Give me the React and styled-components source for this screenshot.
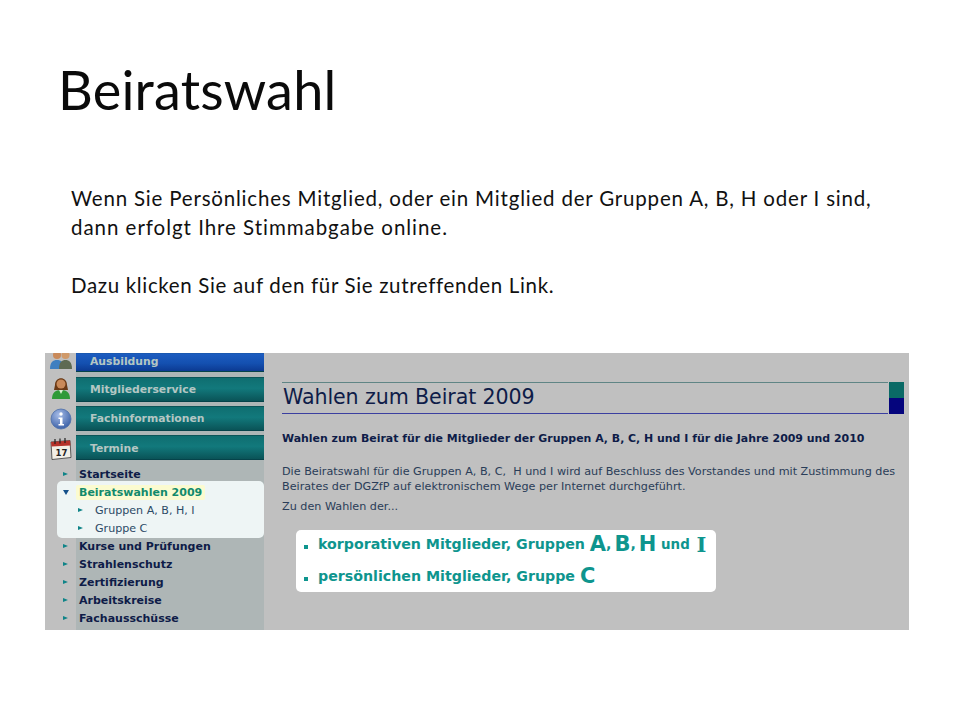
import React from "react";
import styled, { createGlobalStyle } from "styled-components";

const Global = createGlobalStyle`
  html, body { margin: 0; padding: 0; background: #fff; }
`;
const Slide = styled.div`
  width: 960px; height: 720px; box-sizing: border-box; overflow: hidden;
  padding: 58px 45px 0 45px; background: #fff; font-family: Lato, "Open Sans", sans-serif; color: #000;
`;
const Title = styled.h1`
  margin: 0 0 0 13px; font-weight: 400; font-size: 54px; line-height: 64px; letter-spacing: .2px; color: #0a0a0a;
`;
const Intro = styled.div`
  margin: 62px 0 0 26px; font-size: 20.5px; line-height: 29px; color: #111;
`;
const IntroLine = styled.p`
  margin: ${p => (p.$gap ? "29px" : "0")} 0 0; white-space: nowrap; letter-spacing: ${p => p.$ls}px;
`;
const Shot = styled.div`
  margin-top: 53px; width: 864px; height: 277px; display: flex; overflow: hidden; background: #c0c0c0;
  font-family: "DejaVu Sans", Verdana, sans-serif;
`;
const Sidebar = styled.aside`
  width: 219px; flex: none; display: flex;
`;
const IconColumn = styled.div`
  width: 31px; flex: none; display: flex; flex-direction: column; align-items: center;
`;
const IconSlot = styled.div`
  height: ${p => p.$h}px; width: 100%; display: flex; align-items: center; justify-content: center; flex: none; overflow: hidden;
`;
const NavColumn = styled.div`
  width: 188px; flex: none; background: #aeb6b6; display: flex; flex-direction: column;
`;
const NavButton = styled.div`
  height: ${p => p.$h || 25}px; flex: none; margin-bottom: ${p => p.$mb ?? 4.4}px; box-sizing: border-box;
  padding: ${p => (p.$blue ? 0 : 3)}px 0 0 14px; display: flex; align-items: center;
  background: ${p => p.$blue
    ? "linear-gradient(#1c5cc0, #1450b0 55%, #0c3a92)"
    : "linear-gradient(#0f6e70, #12797c 45%, #0a5357)"};
  border-top: 1px solid ${p => (p.$blue ? "#1a58b0" : "#0c5558")};
  border-bottom: 1px solid #06434a;
  color: #b4c6c3; font-size: 10.8px; font-weight: 700; line-height: 1;
`;
const Menu = styled.ul`
  list-style: none; margin: 5px 0 0; padding: 0; flex: 1; background: #aeb6b6;
`;
const Group = styled.div`
  margin: -2px 0 -1px -19px; padding: 2px 0 0 19px; height: 57px; box-sizing: border-box;
  background: #eef5f5; border-radius: 5px; position: relative;
`;
const Item = styled.li`
  height: 18px; display: flex; align-items: center; position: relative; white-space: nowrap;
  padding-left: ${p => (p.$sub ? "19px" : "3px")};
  font-size: ${p => (p.$sub ? "11.1px" : "11px")};
  font-weight: ${p => (p.$sub ? 400 : 700)};
  color: ${p => (p.$sub ? "#2c4a66" : "#0e1c48")};
`;
const Marker = styled.span`
  position: absolute; top: 6.5px; left: ${p => p.$left}px; width: 0; height: 0;
  ${p => p.$open
    ? "border-left: 3px solid transparent; border-right: 3px solid transparent; border-top: 5px solid #14508a;"
    : "border-top: 2.5px solid transparent; border-bottom: 2.5px solid transparent; border-left: 5px solid #0f8488;"}
`;
const ActiveLabel = styled.span`
  background: #fbfbd0; color: #128a6c; padding: 1px 3px; margin-left: -3px; border-radius: 2px;
`;
const Main = styled.main`
  flex: 1; min-width: 0; padding: 29px 5px 0 18px; color: #15254a;
`;
const HeadingRow = styled.div`
  display: flex; align-items: stretch; height: 32px;
`;
const Heading = styled.h2`
  flex: 1; margin: 0; box-sizing: border-box; padding-left: 1px; font-weight: 400; font-size: 20.6px; line-height: 28px;
  letter-spacing: -.1px; color: #0e1c48; border-top: 1px solid #5f8585; border-bottom: 1px solid #3b3fa0;
`;
const HeadingBlock = styled.div`
  width: 15px; flex: none; margin-left: 1px; background: linear-gradient(#0a6a66 50%, #05057d 50%);
`;
const Lead = styled.p`
  margin: 18px 0 0; font-size: 10.95px; line-height: 14px; font-weight: 700; color: #0e1c48; white-space: nowrap;
`;
const Para = styled.p`
  margin: ${p => p.$mt}px 0 0; font-size: 11.2px; line-height: 15px; color: #2a3d58; white-space: nowrap;
`;
const LinkBox = styled.div`
  margin: 16px 0 0 14px; width: 420px; height: 62px; box-sizing: border-box; background: #fff; border-radius: 5px;
  padding: 0 0 0 7px; display: flex; flex-direction: column; color: #0e958e;
`;
const LinkRow = styled.div`
  height: ${p => p.$h}px; display: flex; align-items: flex-end; font-size: 14.2px; font-weight: 700; white-space: nowrap; position: relative; padding-left: 15px; line-height: 19px;
`;
const Square = styled.span`
  position: absolute; left: 1px; bottom: 5px; width: 4px; height: 4px; background: #0e958e;
`;
const Big = styled.span`
  font-size: 21px; line-height: 19px; margin-left: ${p => p.$ml ?? 0}px;
  font-family: ${p => (p.$serif ? '"DejaVu Serif", serif' : "inherit")};
`;
const Tail = styled.span`
  font-size: 13.4px;
`;
const Thin = styled.span`
  font-size: 8.5px;
`;

const People = () => (
  <svg width="24" height="24" viewBox="0 0 24 24" style={{ marginTop: -8 }}>
    <circle cx="8" cy="9" r="4" fill="#c98a5a" />
    <path d="M4 7c1-4 7-4 8 0z" fill="#5a3a1e" />
    <path d="M1 23c0-7 3-9 7-9s7 2 7 9z" fill="#3f7fc0" />
    <circle cx="16.5" cy="9" r="4" fill="#d09a6a" />
    <path d="M12.500 7c1-4 7-4 8 0z" fill="#2a2a2a" />
    <path d="M10 23c0-7 3-9 6.500-9s6.500 2 6.500 9z" fill="#5e6a52" />
  </svg>
);
const Person = () => (
  <svg width="20" height="24" viewBox="0 0 20 24">
    <path d="M4 9c0-9 12-9 12 0l1 5H3z" fill="#6b3a16" />
    <circle cx="10" cy="8" r="4.500" fill="#c98a5a" />
    <path d="M1 23c0-6 3-9 9-9s9 3 9 9z" fill="#2f9a38" />
    <path d="M8 14l2 4 2-4z" fill="#d8f0d0" />
  </svg>
);
const Info = () => (
  <svg width="22" height="22" viewBox="0 0 22 22">
    <defs>
      <radialGradient id="ig" cx=".4" cy=".3" r=".8">
        <stop offset="0" stopColor="#a8bde8" />
        <stop offset="1" stopColor="#2f569f" />
      </radialGradient>
    </defs>
    <circle cx="11" cy="11" r="10" fill="url(#ig)" stroke="#4d6eaa" strokeWidth=".8" />
    <circle cx="11" cy="6" r="1.700" fill="#fff" />
    <path d="M8.500 9.500h4v6.500h1.500v1.500H8.500V16H10v-5H8.500z" fill="#fff" />
  </svg>
);
const Calendar = () => (
  <svg width="23" height="23" viewBox="0 0 23 23">
    <path d="M2 5l19-1.500 1 17-19 2z" fill="#f2efe6" stroke="#3a3a3a" strokeWidth=".8" />
    <path d="M2 5l19-1.500.5 5-19 1z" fill="#b5322a" />
    <path d="M6 2v5M11 1.500v5M16 1v5" stroke="#222" strokeWidth="1.200" />
    <text x="12.500" y="19" fontFamily="DejaVu Sans" fontWeight="700" fontSize="8.500" textAnchor="middle" fill="#222">17</text>
  </svg>
);

const Tri = ({ left = 0, open }) => <Marker $left={left} $open={open} />;

export default function App() {
  return (
    <Slide>
      <Global />
      <Title>Beiratswahl</Title>
      <Intro>
        <IntroLine $ls={0.8}>Wenn Sie Persönliches Mitglied, oder ein Mitglied der Gruppen A, B, H oder I sind,</IntroLine>
        <IntroLine $ls={0.96}>dann erfolgt Ihre Stimmabgabe online.</IntroLine>
        <IntroLine $gap $ls={0.66}>Dazu klicken Sie auf den für Sie zutreffenden Link.</IntroLine>
      </Intro>
      <Shot>
        <Sidebar>
          <IconColumn>
            <IconSlot $h={18}><People /></IconSlot>
            <IconSlot $h={34}><Person /></IconSlot>
            <IconSlot $h={27}><Info /></IconSlot>
            <IconSlot $h={33}><Calendar /></IconSlot>
          </IconColumn>
          <NavColumn>
            <NavButton $blue $h={19} $mb={4.5}>Ausbildung</NavButton>
            <NavButton>Mitgliederservice</NavButton>
            <NavButton>Fachinformationen</NavButton>
            <NavButton $mb={0}>Termine</NavButton>
            <Menu>
              <Item><Tri left={-13} />Startseite</Item>
              <Group>
                <Item><Tri left={-13} open /><ActiveLabel>Beiratswahlen 2009</ActiveLabel></Item>
                <Item $sub><Tri left={2} />Gruppen A, B, H, I</Item>
                <Item $sub><Tri left={2} />Gruppe C</Item>
              </Group>
              <Item><Tri left={-13} />Kurse und Prüfungen</Item>
              <Item><Tri left={-13} />Strahlenschutz</Item>
              <Item><Tri left={-13} />Zertifizierung</Item>
              <Item><Tri left={-13} />Arbeitskreise</Item>
              <Item><Tri left={-13} />Fachausschüsse</Item>
            </Menu>
          </NavColumn>
        </Sidebar>
        <Main>
          <HeadingRow>
            <Heading>Wahlen zum Beirat 2009</Heading>
            <HeadingBlock />
          </HeadingRow>
          <Lead>Wahlen zum Beirat für die Mitglieder der Gruppen A, B, C, H und I für die Jahre 2009 und 2010</Lead>
          <Para $mt={18}>
            Die Beiratswahl für die Gruppen A, B, C,&nbsp; H und I wird auf Beschluss des Vorstandes und mit Zustimmung des
            <br />
            Beirates der DGZfP auf elektronischem Wege per Internet durchgeführt.
          </Para>
          <Para $mt={5}>Zu den Wahlen der...</Para>
          <LinkBox>
            <LinkRow $h={24}>
              <Square />
              korporativen Mitglieder, Gruppen&nbsp;
              <Big>A</Big>,<Thin>&nbsp;</Thin><Big>B</Big>,<Thin>&nbsp;</Thin><Big>H</Big><Tail>&nbsp;und&nbsp;</Tail><Big $serif $ml={2}>I</Big>
            </LinkRow>
            <LinkRow $h={32}>
              <Square />
              persönlichen Mitglieder, Gruppe&nbsp;
              <Big>C</Big>
            </LinkRow>
          </LinkBox>
        </Main>
      </Shot>
    </Slide>
  );
}
